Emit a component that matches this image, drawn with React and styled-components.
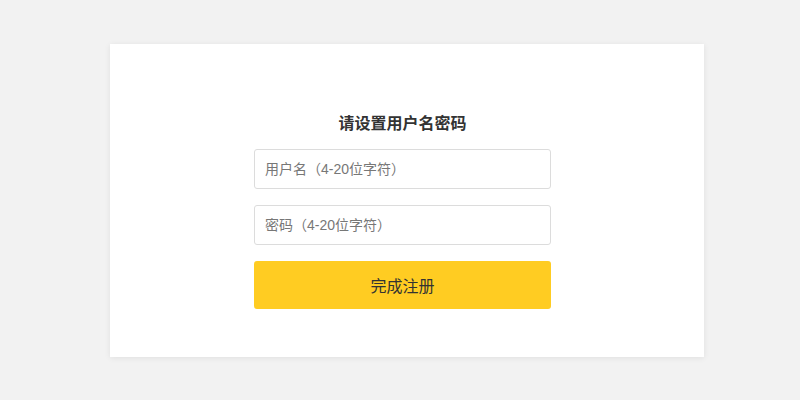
import React from "react";
import styled, { createGlobalStyle } from "styled-components";

const GlobalStyle = createGlobalStyle`
  html, body {
    margin: 0;
    padding: 0;
    background: #f2f2f2;
    font-family: "Liberation Sans", "Noto Sans CJK SC", sans-serif;
  }
`;

const Page = styled.div`
  width: 800px;
  height: 400px;
  padding: 44px 0 0 110px;
  box-sizing: border-box;
`;

const Card = styled.div`
  width: 594px;
  height: 313px;
  box-sizing: border-box;
  background: #fff;
  box-shadow: 0 1px 6px rgba(0, 0, 0, 0.08);
  padding: 70px 0 0 144px;
`;

const Form = styled.form`
  width: 297px;
  display: flex;
  flex-direction: column;
`;

const Title = styled.h2`
  margin: 0 0 16px;
  font-size: 16px;
  line-height: 19px;
  font-weight: bold;
  color: #333;
  text-align: center;
`;

const Input = styled.input`
  height: 40px;
  box-sizing: border-box;
  border: 1px solid #dcdcdc;
  border-radius: 3px;
  padding: 0 10px;
  margin-bottom: 16px;
  font-size: 14px;
  font-family: inherit;
  color: #333;
  outline: none;
  &::placeholder {
    color: #777;
  }
`;

const Submit = styled.button`
  height: 48px;
  border: none;
  border-radius: 3px;
  background: #ffcc22;
  color: #333;
  font-size: 16px;
  font-family: inherit;
  cursor: pointer;
`;

export default function App() {
  return (
    <>
      <GlobalStyle />
      <Page>
        <Card>
          <Form onSubmit={(e) => e.preventDefault()}>
            <Title>请设置用户名密码</Title>
            <Input placeholder="用户名（4-20位字符）" />
            <Input type="password" placeholder="密码（4-20位字符）" />
            <Submit type="submit">完成注册</Submit>
          </Form>
        </Card>
      </Page>
    </>
  );
}
